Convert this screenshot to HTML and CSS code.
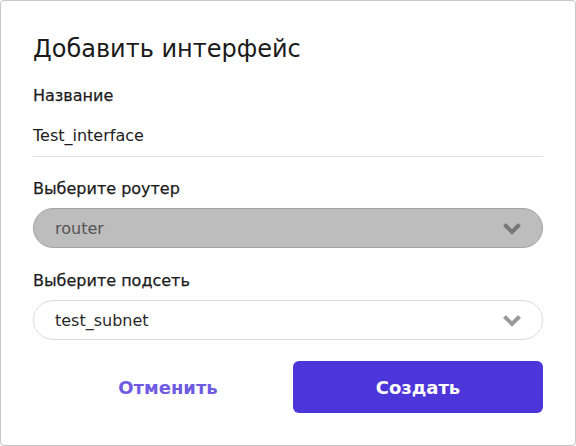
FILE: index.html
```html
<!DOCTYPE html>
<html lang="ru">
<head>
<meta charset="utf-8">
<link rel="stylesheet" href="styles.css">
</head>
<body>
<div class="dialog">
  <h1 class="title">Добавить интерфейс</h1>
  <div class="field">
    <div class="label">Название</div>
    <div class="text-input">Test_interface</div>
  </div>
  <div class="field">
    <div class="label label-sep">Выберите роутер</div>
    <div class="select select-disabled">
      <span>router</span>
      <svg class="chev" width="20" height="13" viewBox="0 0 20 13"><path d="M2.5 2.5 L10 10 L17.5 2.5" fill="none" stroke="currentColor" stroke-width="4" stroke-linejoin="miter"/></svg>
    </div>
  </div>
  <div class="field">
    <div class="label label-sep">Выберите подсеть</div>
    <div class="select">
      <span>test_subnet</span>
      <svg class="chev" width="20" height="13" viewBox="0 0 20 13"><path d="M2.5 2.5 L10 10 L17.5 2.5" fill="none" stroke="currentColor" stroke-width="4" stroke-linejoin="miter"/></svg>
    </div>
  </div>
  <div class="actions">
    <button class="btn btn-cancel">Отменить</button>
    <button class="btn btn-primary">Создать</button>
  </div>
</div>
</body>
</html>
```
FILE: styles.css
```css
html, body {
  margin: 0;
  padding: 0;
  background: #ffffff;
}
body {
  font-family: "DejaVu Sans", "Noto Sans", sans-serif;
  color: #1c1c1c;
}
.dialog {
  box-sizing: border-box;
  width: 576px;
  height: 446px;
  border: 1px solid #c8c8c8;
  border-radius: 4px;
  padding: 30px 32px 0 32px;
  background: #fff;
}
.title {
  margin: 0;
  font-size: 24px;
  line-height: 36px;
  font-weight: 400;
  color: #1a1a1a;
}
.field {
  display: flex;
  flex-direction: column;
}
.label {
  margin-top: 18px;
  font-size: 16px;
  line-height: 22px;
  font-weight: 400;
  -webkit-text-stroke: 0.25px currentColor;
}
.label-sep {
  margin-top: 21px;
}
.field + .field + .field .label-sep {
  margin-top: 22px;
}
.text-input {
  margin-top: 18px;
  font-size: 16px;
  line-height: 22px;
  padding-bottom: 9px;
  border-bottom: 1px solid #e0e0e0;
}
.select {
  margin-top: 8px;
  box-sizing: border-box;
  height: 40px;
  border: 1px solid #dcdcdc;
  border-radius: 20px;
  display: flex;
  align-items: center;
  justify-content: space-between;
  padding: 0 20px 0 21px;
  font-size: 16px;
  color: #2a2a2a;
  background: #fff;
}
.select .chev {
  color: #9a9a9a;
}
.select-disabled {
  background: #bdbdbd;
  border-color: #a4a4a4;
  color: #555;
}
.select-disabled .chev {
  color: #777;
}
.actions {
  margin-top: 21px;
  display: flex;
}
.btn {
  width: 250px;
  height: 52px;
  border: none;
  border-radius: 6px;
  font-family: inherit;
  font-size: 18px;
  font-weight: 700;
  background: transparent;
  cursor: pointer;
}
.btn-cancel {
  margin-left: 10px;
  color: #6f5be3;
}
.btn-primary {
  background: #4d36d9;
  color: #fff;
}
```
